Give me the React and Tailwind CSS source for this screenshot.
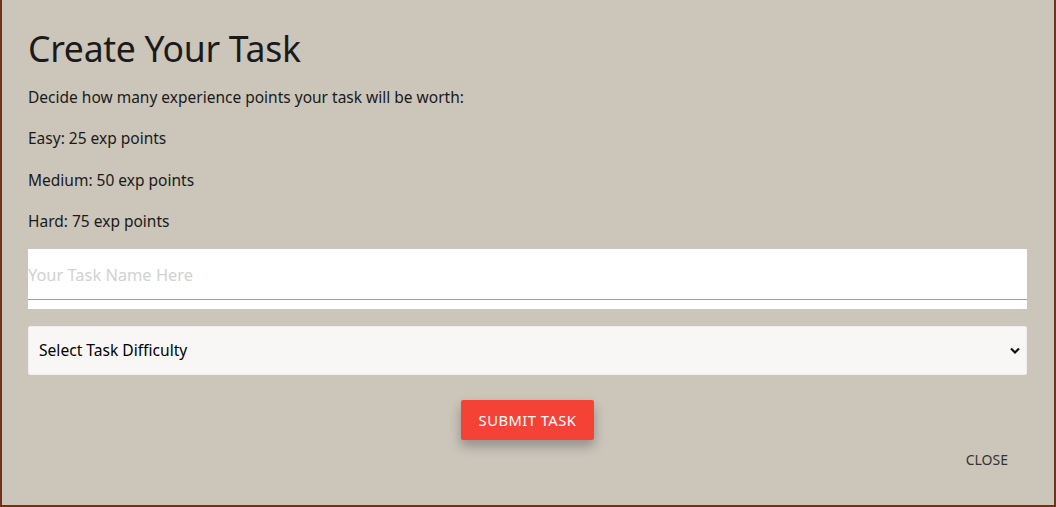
export default function App() {
  return (
    <div
      className="w-[1056px] h-[507px] bg-[#cbc5ba] border-l-2 border-r-2 border-b-2 border-[#6b3418] text-[#1a1a1a] overflow-hidden"
      style={{ fontFamily: '"Noto Sans", "Open Sans", sans-serif' }}
    >
      <div className="pl-[26px] pr-[27px] pt-[24px]">
        <h4 className="text-[35.6px] leading-[48px] font-normal tracking-[-0.3px]">Create Your Task</h4>
        <p className="text-[15.5px] mt-[13px] leading-[24px]">Decide how many experience points your task will be worth:</p>
        <p className="text-[15.5px] mt-[17px] leading-[24px]">Easy: 25 exp points</p>
        <p className="text-[15.5px] mt-[18px] leading-[24px]">Medium: 50 exp points</p>
        <p className="text-[15.5px] mt-[17px] leading-[24px]">Hard: 75 exp points</p>

        <div className="mt-[16px] bg-white h-[60px]">
          <input
            className="w-full h-[51px] border-b border-[#9e9e9e] outline-none text-[16.4px] placeholder-[#d1d1d1] bg-transparent"
            placeholder="Your Task Name Here"
          />
        </div>

        <div className="mt-[17px] h-[49px] bg-[#f8f7f5] rounded-[2px] border border-[#eeeeee] flex items-center justify-between pl-[10px] pr-[6px]">
          <span className="text-[15.6px] text-black">Select Task Difficulty</span>
          <svg width="10" height="8" viewBox="0 0 10 8">
            <path d="M1 1.5 L5 5.5 L9 1.5" fill="none" stroke="#111" strokeWidth="2.2" />
          </svg>
        </div>

        <div className="flex justify-center mt-[25px]">
          <button className="bg-[#f44336] text-white text-[14.7px] tracking-[0.5px] h-[40px] px-[18px] rounded-[2px] shadow-[0_6px_12px_rgba(0,0,0,0.28)]">
            SUBMIT TASK
          </button>
        </div>

        <div className="flex justify-end mt-[9px] pr-[19px]">
          <span className="text-[14px] text-[#333]">CLOSE</span>
        </div>
      </div>
    </div>
  );
}
